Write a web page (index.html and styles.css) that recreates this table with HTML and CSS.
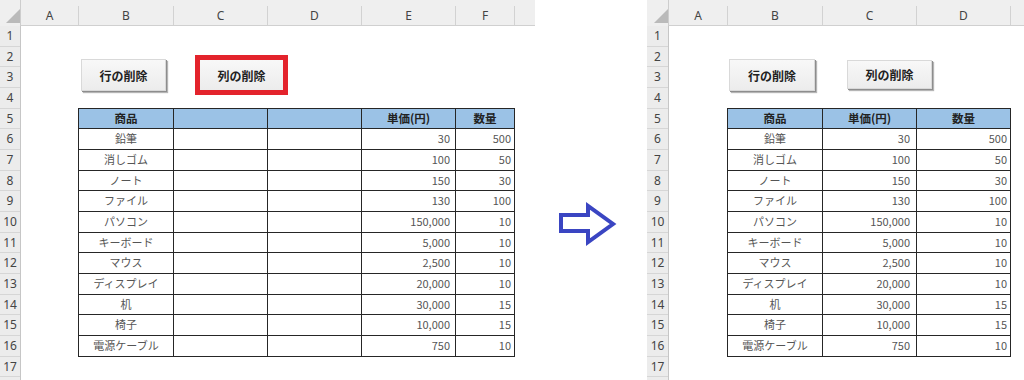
FILE: index.html
```html
<!DOCTYPE html>
<html lang="ja">
<head>
<meta charset="utf-8">
<title>列の削除</title>
<link rel="stylesheet" href="styles.css">
</head>
<body>
<div class="page">
  <div class="sheet sheet-left">
    <div class="corner"><svg width="21" height="26" viewBox="0 0 21 26"><polygon points="20,9 20,23 6,23" fill="#bababa"/></svg></div>
    <div class="colheads">
      <div class="ch w58">A</div><div class="ch w95">B</div><div class="ch w94">C</div><div class="ch w94">D</div><div class="ch w94">E</div><div class="ch w59">F</div><div class="ch grow"></div>
    </div>
    <div class="rownums">
      <div class="rn">1</div><div class="rn">2</div><div class="rn">3</div><div class="rn">4</div><div class="rn">5</div><div class="rn">6</div><div class="rn">7</div><div class="rn">8</div><div class="rn">9</div><div class="rn">10</div><div class="rn">11</div><div class="rn">12</div><div class="rn">13</div><div class="rn">14</div><div class="rn">15</div><div class="rn">16</div><div class="rn">17</div>
    </div>
    <div class="canvas">
      <div class="tbl tbl-left">
        <div class="c h">商品</div><div class="c h"></div><div class="c h"></div><div class="c h">単価(円)</div><div class="c h">数量</div>
        <div class="c t">鉛筆</div><div class="c"></div><div class="c"></div><div class="c n">30</div><div class="c q">500</div>
        <div class="c t">消しゴム</div><div class="c"></div><div class="c"></div><div class="c n">100</div><div class="c q">50</div>
        <div class="c t">ノート</div><div class="c"></div><div class="c"></div><div class="c n">150</div><div class="c q">30</div>
        <div class="c t">ファイル</div><div class="c"></div><div class="c"></div><div class="c n">130</div><div class="c q">100</div>
        <div class="c t">パソコン</div><div class="c"></div><div class="c"></div><div class="c n">150,000</div><div class="c q">10</div>
        <div class="c t">キーボード</div><div class="c"></div><div class="c"></div><div class="c n">5,000</div><div class="c q">10</div>
        <div class="c t">マウス</div><div class="c"></div><div class="c"></div><div class="c n">2,500</div><div class="c q">10</div>
        <div class="c t">ディスプレイ</div><div class="c"></div><div class="c"></div><div class="c n">20,000</div><div class="c q">10</div>
        <div class="c t">机</div><div class="c"></div><div class="c"></div><div class="c n">30,000</div><div class="c q">15</div>
        <div class="c t">椅子</div><div class="c"></div><div class="c"></div><div class="c n">10,000</div><div class="c q">15</div>
        <div class="c t">電源ケーブル</div><div class="c"></div><div class="c"></div><div class="c n">750</div><div class="c q">10</div>
      </div>
      <button class="xbtn l-row">行の削除</button>
      <div class="highlight"><button class="xbtn inner">列の削除</button></div>
    </div>
  </div>

  <div class="gap">
    <svg class="arrow" width="60" height="46" viewBox="0 0 60 46"><polygon points="4,13 31,13 31,4 56,22 31,40 31,29 4,29" fill="#fff" stroke="#3a45c2" stroke-width="4" stroke-linejoin="miter"/></svg>
  </div>

  <div class="sheet sheet-right">
    <div class="corner"><svg width="22" height="26" viewBox="0 0 22 26"><polygon points="21,9 21,23 7,23" fill="#bababa"/></svg></div>
    <div class="colheads">
      <div class="ch w59">A</div><div class="ch w95">B</div><div class="ch w94">C</div><div class="ch w94">D</div><div class="ch grow"></div>
    </div>
    <div class="rownums">
      <div class="rn">1</div><div class="rn">2</div><div class="rn">3</div><div class="rn">4</div><div class="rn">5</div><div class="rn">6</div><div class="rn">7</div><div class="rn">8</div><div class="rn">9</div><div class="rn">10</div><div class="rn">11</div><div class="rn">12</div><div class="rn">13</div><div class="rn">14</div><div class="rn">15</div><div class="rn">16</div><div class="rn">17</div>
    </div>
    <div class="canvas canvas-right">
      <div class="tbl tbl-right">
        <div class="c h">商品</div><div class="c h">単価(円)</div><div class="c h">数量</div>
        <div class="c t">鉛筆</div><div class="c n2">30</div><div class="c q">500</div>
        <div class="c t">消しゴム</div><div class="c n2">100</div><div class="c q">50</div>
        <div class="c t">ノート</div><div class="c n2">150</div><div class="c q">30</div>
        <div class="c t">ファイル</div><div class="c n2">130</div><div class="c q">100</div>
        <div class="c t">パソコン</div><div class="c n2">150,000</div><div class="c q">10</div>
        <div class="c t">キーボード</div><div class="c n2">5,000</div><div class="c q">10</div>
        <div class="c t">マウス</div><div class="c n2">2,500</div><div class="c q">10</div>
        <div class="c t">ディスプレイ</div><div class="c n2">20,000</div><div class="c q">10</div>
        <div class="c t">机</div><div class="c n2">30,000</div><div class="c q">15</div>
        <div class="c t">椅子</div><div class="c n2">10,000</div><div class="c q">15</div>
        <div class="c t">電源ケーブル</div><div class="c n2">750</div><div class="c q">10</div>
      </div>
      <button class="xbtn r-row">行の削除</button>
      <button class="xbtn r-col">列の削除</button>
    </div>
  </div>
</div>
</body>
</html>
```

FILE: styles.css
```css
html, body {
  margin: 0;
  padding: 0;
  background: #ffffff;
}

body {
  font-family: "Noto Sans CJK JP", "Noto Sans", sans-serif;
}

.page {
  display: flex;
  width: 1024px;
  height: 380px;
  overflow: hidden;
}

.sheet {
  display: grid;
  grid-template-columns: 21px 1fr;
  grid-template-rows: 26px 1fr;
  height: 380px;
  flex: none;
  overflow: hidden;
}

.sheet-left {
  width: 535px;
}

.sheet-right {
  width: 377px;
  grid-template-columns: 22px 1fr;
}

.gap {
  width: 112px;
  flex: none;
  box-sizing: border-box;
  padding-top: 202px;
  padding-left: 22px;
}

.arrow {
  display: block;
}

.corner {
  background: #efefef;
  border-right: 1px solid #cdcdcd;
  box-sizing: border-box;
}

.corner svg {
  display: block;
}

.colheads {
  display: flex;
  background: #efefef;
  border-bottom: 1px solid #d0d0d0;
  box-sizing: border-box;
}

.ch {
  flex: none;
  box-sizing: border-box;
  margin-top: 6px;
  border-right: 1px solid #d2d2d2;
  text-align: center;
  font-family: "Noto Sans", sans-serif;
  font-size: 12px;
  line-height: 19px;
  color: #444444;
}

.w58 { width: 58px; }
.w59 { width: 59px; }
.w94 { width: 94px; }
.w95 { width: 95px; }
.grow { flex: 1; border-right: none; }

.rownums {
  display: flex;
  flex-direction: column;
  background: #ececec;
  border-right: 1px solid #c6c6c6;
}

.rn {
  flex: none;
  height: 20.67px;
  box-sizing: border-box;
  border-bottom: 1px solid #d6d6d6;
  text-align: center;
  font-family: "Noto Sans", sans-serif;
  font-size: 12px;
  line-height: 20px;
  color: #444444;
}

.canvas {
  position: relative;
  box-sizing: border-box;
  padding-top: 82.67px;
  padding-left: 58px;
}

.canvas-right {
  padding-left: 59px;
}

.tbl {
  display: grid;
  grid-auto-rows: 20.67px;
  width: max-content;
  margin-left: -1px;
  margin-top: -1px;
  border-left: 1px solid #262626;
  border-top: 1px solid #262626;
}

.tbl-left {
  grid-template-columns: 95px 94px 94px 94px 59px;
}

.tbl-right {
  grid-template-columns: 95px 94px 94px;
}

.c {
  box-sizing: border-box;
  border-right: 1px solid #262626;
  border-bottom: 1px solid #262626;
  padding: 0 4px;
  font-size: 11px;
  line-height: 19.67px;
  color: #555555;
  white-space: nowrap;
  overflow: hidden;
}

.h {
  background: #9bc2e6;
  font-weight: bold;
  font-size: 11.5px;
  color: #222222;
  text-align: center;
}

.t { text-align: center; }
.n { text-align: right; padding-right: 5px; }
.n2 { text-align: right; padding-right: 6px; }
.q { text-align: right; padding-right: 3px; }

.xbtn {
  position: absolute;
  box-sizing: border-box;
  width: 85px;
  height: 32px;
  margin: 0;
  padding: 0;
  background: linear-gradient(#f8f8f8, #ececec);
  border: 1px solid #d9d9d9;
  border-radius: 0;
  box-shadow: 1px 1px 0 #8d8d8d, 2px 2px 1px #b5b5b5;
  font-family: "Noto Sans CJK JP", sans-serif;
  font-weight: bold;
  font-size: 12px;
  color: #222222;
  -webkit-appearance: none;
  appearance: none;
}

.l-row { left: 60px; top: 33px; }

.highlight {
  position: absolute;
  left: 174px;
  top: 29px;
  width: 93px;
  height: 40px;
  box-sizing: border-box;
  border: 5px solid #e3232c;
}

.xbtn.inner {
  position: static;
  display: block;
  width: 100%;
  height: 100%;
  border: none;
  box-shadow: none;
}

.r-row { left: 60px; top: 33px; width: 86px; }
.r-col { left: 178px; top: 34px; height: 29px; }
```
